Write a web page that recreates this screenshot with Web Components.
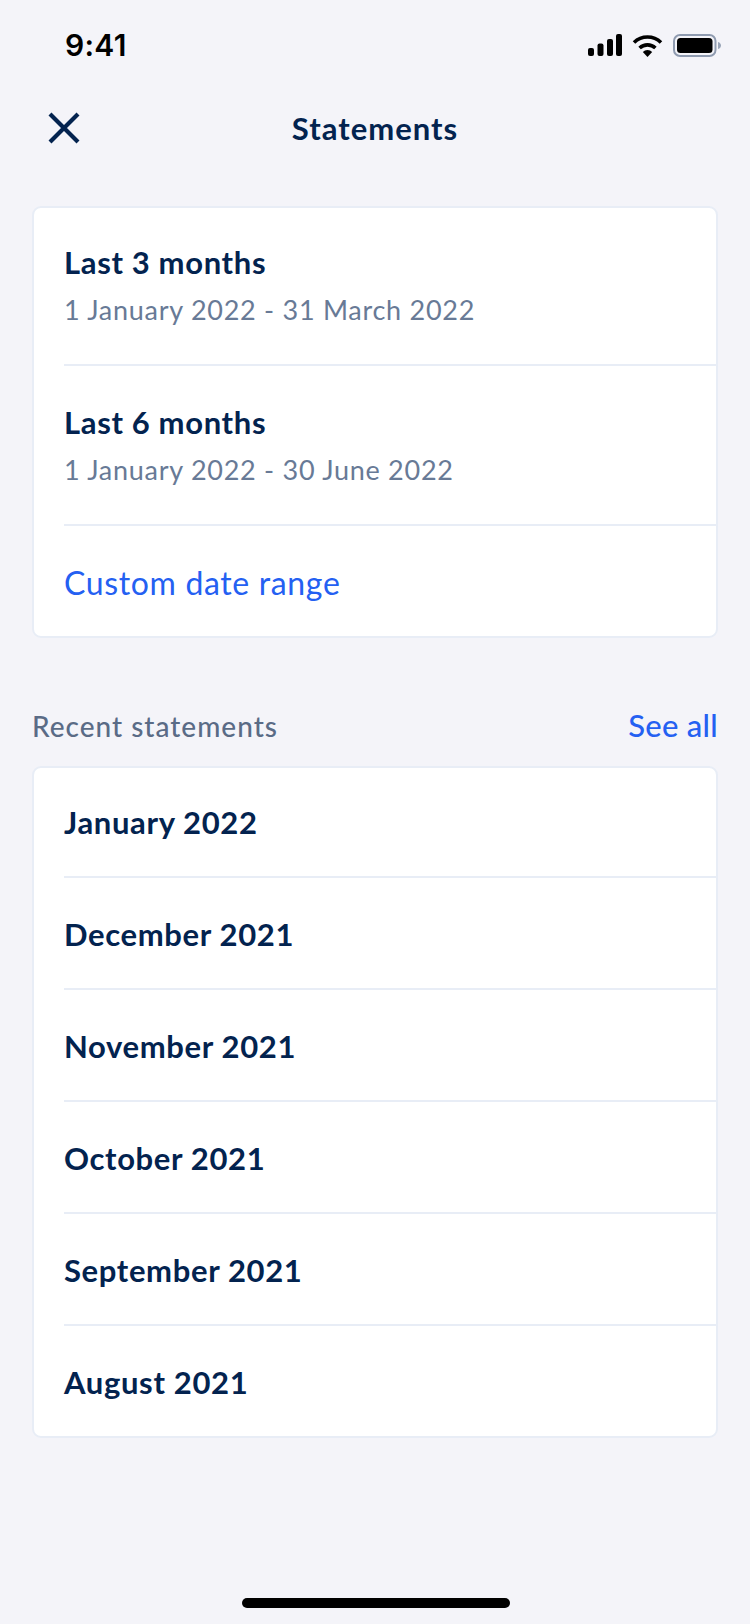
<!DOCTYPE html>
<html lang="en">
<head>
<meta charset="utf-8">
<title>Statements</title>
<style>
  html, body { margin: 0; padding: 0; background: #f4f4f9; }
  body { width: 750px; height: 1624px; overflow: hidden; font-family: Lato, "Liberation Sans", sans-serif; }
</style>
</head>
<body>
<app-screen>
  <status-bar></status-bar>
  <nav-header>Statements</nav-header>
  <list-card>
    <list-row height="156" top="36" heading="Last 3 months" sub="1 January 2022 - 31 March 2022"></list-row>
    <list-row height="158" top="38" heading="Last 6 months" sub="1 January 2022 - 30 June 2022"></list-row>
    <list-row height="110" top="39" link="Custom date range" last></list-row>
  </list-card>
  <section-head action="See all">Recent statements</section-head>
  <list-card>
    <list-row height="108" top="36" heading="January 2022"></list-row>
    <list-row height="110" top="38" heading="December 2021"></list-row>
    <list-row height="110" top="38" heading="November 2021"></list-row>
    <list-row height="110" top="38" heading="October 2021"></list-row>
    <list-row height="110" top="38" heading="September 2021"></list-row>
    <list-row height="110" top="38" heading="August 2021" last></list-row>
  </list-card>
  <home-indicator></home-indicator>
</app-screen>

<script>
  // Small helper: every element gets an open shadow root filled from a string.
  class Base extends HTMLElement {
    constructor() {
      super();
      this.attachShadow({ mode: 'open' });
    }
  }

  customElements.define('app-screen', class extends Base {
    connectedCallback() {
      this.shadowRoot.innerHTML = `
        <style>
          :host { display: flex; flex-direction: column; width: 750px; height: 1624px; background: #f4f4f9; position: relative; }
        </style>
        <slot></slot>`;
    }
  });

  customElements.define('status-bar', class extends Base {
    connectedCallback() {
      this.shadowRoot.innerHTML = `
        <style>
          :host { display: flex; align-items: center; justify-content: space-between; height: 90px; padding: 0 28px 0 65px; box-sizing: border-box; }
          .time { font: 600 30px/1 Inter, sans-serif; color: #000; letter-spacing: .3px; }
          .icons { display: flex; align-items: center; gap: 10px; }
          svg { display: block; }
        </style>
        <span class="time">9:41</span>
        <span class="icons">
          <svg width="34" height="22" viewBox="0 0 34 22" fill="#000">
            <rect x="0" y="14" width="6" height="8" rx="2"/>
            <rect x="9.5" y="9.5" width="6" height="12.5" rx="2"/>
            <rect x="19" y="5" width="6" height="17" rx="2"/>
            <rect x="28" y="0" width="6" height="22" rx="2"/>
          </svg>
          <svg width="31" height="23" viewBox="0 0 31 23">
            <path d="M2 8.5 A19.5 19.5 0 0 1 29 8.5" fill="none" stroke="#000" stroke-width="3.6"/>
            <path d="M7.6 14 A11.6 11.6 0 0 1 23.4 14" fill="none" stroke="#000" stroke-width="3.6"/>
            <path d="M15.5 23 L10.8 18 A6.6 6.6 0 0 1 20.2 18 Z" fill="#000"/>
          </svg>
          <svg width="49" height="23" viewBox="0 0 49 23">
            <rect x="1" y="1" width="41.5" height="21" rx="6" fill="none" stroke="#8f9bb0" stroke-width="2"/>
            <rect x="4" y="4" width="35.5" height="15" rx="3.5" fill="#000"/>
            <path d="M45 8 C47 8.5 48 10 48 11.5 C48 13 47 14.5 45 15 Z" fill="#9aa5b8"/>
          </svg>
        </span>`;
    }
  });

  customElements.define('nav-header', class extends Base {
    connectedCallback() {
      this.shadowRoot.innerHTML = `
        <style>
          :host { display: flex; align-items: center; justify-content: center; position: relative; height: 76px; margin-bottom: 40px; color: #03234f; }
          svg { position: absolute; left: 47px; top: 21px; display: block; }
          span { font: 700 31px/1 Lato, sans-serif; letter-spacing: 1px; }
        </style>
        <svg width="34" height="34" viewBox="0 0 34 34" fill="none" stroke="#03234f" stroke-width="4.2">
          <path d="M3 3 L31 31 M31 3 L3 31"/>
        </svg>
        <span><slot></slot></span>`;
    }
  });

  customElements.define('list-card', class extends Base {
    connectedCallback() {
      this.shadowRoot.innerHTML = `
        <style>
          :host { display: block; margin: 0 32px; background: #fff; border: 2px solid #e8edf6; border-radius: 9px; overflow: hidden; }
        </style>
        <slot></slot>`;
    }
  });

  customElements.define('list-row', class extends Base {
    connectedCallback() {
      const heading = this.getAttribute('heading');
      const sub = this.getAttribute('sub');
      const link = this.getAttribute('link');
      const height = this.getAttribute('height');
      const top = this.getAttribute('top');
      this.shadowRoot.innerHTML = `
        <style>
          :host { display: block; padding-left: 30px; }
          .row { height: ${height - top}px; padding-top: ${top}px; border-bottom: 2px solid #e8edf6; }
          :host([last]) .row { border-bottom: 0; }
          .h { font: 700 31px/36px Lato, sans-serif; color: #03234f; letter-spacing: .65px; }
          .s { font: 400 27px/34px Lato, sans-serif; color: #687a96; letter-spacing: .73px; margin-top: 13px; }
          .l { font: 400 32px/36px Lato, sans-serif; color: #2460f2; letter-spacing: .65px; }
        </style>
        <div class="row">
          ${heading ? `<div class="h">${heading}</div>` : ''}
          ${sub ? `<div class="s">${sub}</div>` : ''}
          ${link ? `<div class="l">${link}</div>` : ''}
        </div>`;
    }
  });

  customElements.define('section-head', class extends Base {
    connectedCallback() {
      this.shadowRoot.innerHTML = `
        <style>
          :host { display: flex; align-items: baseline; justify-content: space-between; margin: 69px 32px 0; height: 59px; }
          .t { font: 500 28px/36px Lato, sans-serif; color: #5a6b86; letter-spacing: 1px; }
          .a { font: 500 31px/36px Lato, sans-serif; color: #2460f2; letter-spacing: .3px; }
        </style>
        <span class="t"><slot></slot></span>
        <span class="a">${this.getAttribute('action')}</span>`;
    }
  });

  customElements.define('home-indicator', class extends Base {
    connectedCallback() {
      this.shadowRoot.innerHTML = `
        <style>
          :host { display: block; position: absolute; left: 242px; bottom: 16px; width: 268px; height: 10px; border-radius: 5px; background: #000; }
        </style>`;
    }
  });
</script>
</body>
</html>
